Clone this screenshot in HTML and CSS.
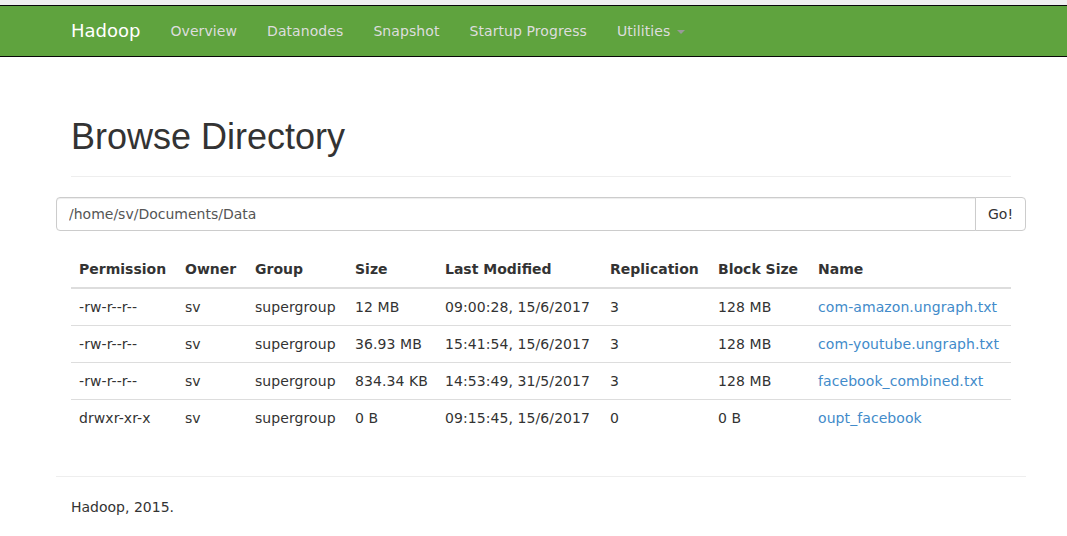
FILE: index.html
```html
<!DOCTYPE html>
<html>
<head>
<meta charset="utf-8">
<title>Browsing HDFS</title>
<link rel="stylesheet" href="styles.css">
</head>
<body>
<div class="topstrip"></div>
<header class="navbar">
  <div class="container nav-inner">
    <a class="brand" href="#">Hadoop</a>
    <ul class="nav">
      <li><a href="#">Overview</a></li>
      <li><a href="#">Datanodes</a></li>
      <li><a href="#">Snapshot</a></li>
      <li><a href="#">Startup Progress</a></li>
      <li><a href="#">Utilities <span class="caret"></span></a></li>
    </ul>
  </div>
</header>
<main class="container">
  <div class="page-header"><h1>Browse Directory</h1></div>
  <form class="row input-group">
    <input type="text" class="form-control" value="/home/sv/Documents/Data">
    <button class="btn" type="button">Go!</button>
  </form>
  <div class="spacer"></div>
  <table class="table">
    <colgroup>
      <col class="c-perm"><col class="c-owner"><col class="c-group"><col class="c-size">
      <col class="c-mod"><col class="c-rep"><col class="c-block"><col class="c-name">
    </colgroup>
    <thead>
      <tr><th>Permission</th><th>Owner</th><th>Group</th><th>Size</th><th>Last Modified</th><th>Replication</th><th>Block Size</th><th>Name</th></tr>
    </thead>
    <tbody>
      <tr><td>-rw-r--r--</td><td>sv</td><td>supergroup</td><td>12 MB</td><td>09:00:28, 15/6/2017</td><td>3</td><td>128 MB</td><td><a href="#">com-amazon.ungraph.txt</a></td></tr>
      <tr><td>-rw-r--r--</td><td>sv</td><td>supergroup</td><td>36.93 MB</td><td>15:41:54, 15/6/2017</td><td>3</td><td>128 MB</td><td><a href="#">com-youtube.ungraph.txt</a></td></tr>
      <tr><td>-rw-r--r--</td><td>sv</td><td>supergroup</td><td>834.34 KB</td><td>14:53:49, 31/5/2017</td><td>3</td><td>128 MB</td><td><a href="#">facebook_combined.txt</a></td></tr>
      <tr><td>drwxr-xr-x</td><td>sv</td><td>supergroup</td><td>0 B</td><td>09:15:45, 15/6/2017</td><td>0</td><td>0 B</td><td><a href="#">oupt_facebook</a></td></tr>
    </tbody>
  </table>
  <div class="row footer">
    <hr>
    <p>Hadoop, 2015.</p>
  </div>
</main>
</body>
</html>
```

FILE: styles.css
```css
* { box-sizing: border-box; }
html, body { margin: 0; padding: 0; }
body {
  font-family: "DejaVu Sans", sans-serif;
  font-size: 14px;
  line-height: 20px;
  color: #333;
  background: #fff;
}
a { color: #428bca; text-decoration: none; }

.topstrip { height: 5px; background: #efefef; }

.container {
  width: 970px;
  margin-left: 56px;
  padding: 0 15px;
}

.navbar {
  background: #5fa33e;
  border-top: 1px solid #080808;
  border-bottom: 1px solid #080808;
  height: 52px;
  margin-bottom: 20px;
}
.nav-inner { display: flex; align-items: center; height: 50px; }
.brand {
  display: block;
  margin-left: -15px;
  padding: 15px;
  font-size: 18px;
  line-height: 20px;
  color: #fff;
}
.nav { display: flex; list-style: none; margin: 0; padding: 0; }
.nav a {
  display: block;
  padding: 15px;
  line-height: 20px;
  color: #ddd;
  letter-spacing: 0.08px;
}
.caret {
  display: inline-block;
  width: 0; height: 0;
  margin-left: 2px;
  vertical-align: middle;
  border-top: 4px solid #999;
  border-left: 4px solid transparent;
  border-right: 4px solid transparent;
}

.page-header {
  margin: 60px 0 20px;
  padding-bottom: 9px;
  border-bottom: 1px solid #eee;
}
.page-header h1 {
  margin: 20px 0 10px;
  font-family: "Liberation Sans", Arial, sans-serif;
  font-weight: 500;
  font-size: 36px;
  line-height: 1.1;
  color: #333;
}

.row { margin-left: -15px; margin-right: -15px; }
.input-group { display: flex; margin-top: 0; margin-bottom: 0; }
.form-control {
  flex: 1;
  height: 34px;
  padding: 6px 12px;
  font-family: "DejaVu Sans", sans-serif;
  font-size: 14px;
  line-height: 20px;
  color: #555;
  background: #fff;
  border: 1px solid #ccc;
  border-radius: 4px 0 0 4px;
  box-shadow: inset 0 1px 1px rgba(0,0,0,.075);
  outline: none;
}
.btn {
  height: 34px;
  padding: 6px 12px;
  margin-left: -1px;
  font-family: "DejaVu Sans", sans-serif;
  font-size: 14px;
  line-height: 20px;
  color: #333;
  background: #fff;
  border: 1px solid #ccc;
  border-radius: 0 4px 4px 0;
}
.spacer { height: 20px; }

.table {
  width: 100%;
  border-collapse: collapse;
  border-spacing: 0;
  margin-bottom: 20px;
}
.c-perm { width: 106px; }
.c-owner { width: 70px; }
.c-group { width: 100px; }
.c-size { width: 90px; }
.c-mod { width: 165px; }
.c-rep { width: 108px; }
.c-block { width: 100px; }
.c-name { width: 201px; }
.table th, .table td {
  padding: 8px;
  text-align: left;
  vertical-align: top;
  line-height: 20px;
  white-space: nowrap;
}
.table td { letter-spacing: 0.08px; }
.table th {
  font-weight: bold;
  vertical-align: bottom;
  border-bottom: 2px solid #ddd;
}
.table td { border-top: 1px solid #ddd; }

.footer { display: flow-root; }
.footer hr {
  margin: 20px 0;
  border: 0;
  border-top: 1px solid #eee;
}
.footer p { margin: 0 0 10px; padding: 0 15px; }
```
